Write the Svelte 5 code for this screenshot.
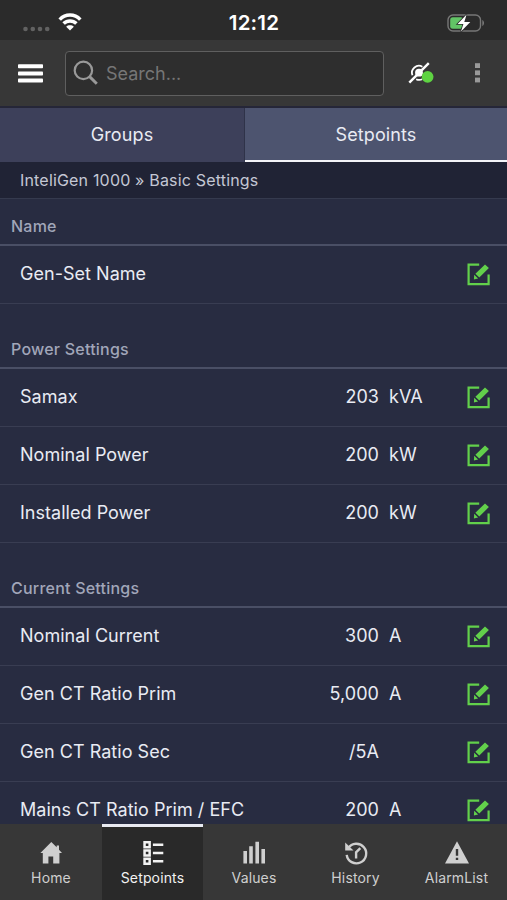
<script lang="ts">
  type Icon = "home" | "setpoints" | "values" | "history" | "alarm";

  interface Setpoint {
    name: string;
    value?: string;
    unit?: string;
  }

  const sections: Array<{ title: string; items: Setpoint[] }> = [
    { title: "Name", items: [{ name: "Gen-Set Name" }] },
    {
      title: "Power Settings",
      items: [
        { name: "Samax", value: "203", unit: "kVA" },
        { name: "Nominal Power", value: "200", unit: "kW" },
        { name: "Installed Power", value: "200", unit: "kW" },
      ],
    },
    {
      title: "Current Settings",
      items: [
        { name: "Nominal Current", value: "300", unit: "A" },
        { name: "Gen CT Ratio Prim", value: "5,000", unit: "A" },
        { name: "Gen CT Ratio Sec", value: "/5A" },
        { name: "Mains CT Ratio Prim / EFC", value: "200", unit: "A" },
      ],
    },
  ];

  const navItems: Array<{ id: Icon; label: string }> = [
    { id: "home", label: "Home" },
    { id: "setpoints", label: "Setpoints" },
    { id: "values", label: "Values" },
    { id: "history", label: "History" },
    { id: "alarm", label: "AlarmList" },
  ];

  let tab = $state("Setpoints");
  let page = $state<Icon>("setpoints");
</script>

<div class="app">
  <div class="status">
    <div class="status__left">
      <svg width="27" height="6" viewBox="0 0 27 6" fill="#626262">
        <circle cx="2.5" cy="3" r="2.3" />
        <circle cx="9.8" cy="3" r="2.3" />
        <circle cx="17" cy="3" r="2.3" />
        <circle cx="24.2" cy="3" r="2.3" />
      </svg>
      <svg class="wifi" width="24" height="18" viewBox="0 0 24 18" fill="none" stroke="#fff" stroke-width="3.5">
        <path d="M1.7 6.6C7.4.6 16.6.6 22.3 6.6" />
        <path d="M5.6 10.6c3.6-3.6 9.2-3.6 12.8 0" />
        <path d="M12 17.5 8.2 13.7c2-1.9 5.6-1.9 7.6 0z" fill="#fff" stroke="none" />
      </svg>
    </div>
    <span class="status__time">12:12</span>
    <svg class="battery" width="38" height="18" viewBox="0 0 38 18">
      <rect x="1" y="1" width="32.5" height="16" rx="5" fill="none" stroke="#777" stroke-width="1.4" />
      <path d="M35.3 6v6c2.3-1 2.3-5 0-6z" fill="#777" />
      <rect x="3.2" y="3.2" width="13" height="11.6" rx="2.5" fill="#62c466" />
      <path d="M19.6.6 10.6 10h5.8L14 17.6 23.3 8h-6z" fill="#fff" stroke="#2b2b2b" stroke-width="1.6" paint-order="stroke" />
    </svg>
  </div>

  <header class="toolbar">
    <button type="button" class="toolbar__button toolbar__menu" aria-label="Menu">
      <svg width="25" height="19" viewBox="0 0 25 19" fill="#fff">
        <rect width="25" height="4" y="0.3" rx=".8" />
        <rect width="25" height="4" y="7.5" rx=".8" />
        <rect width="25" height="4" y="14.6" rx=".8" />
      </svg>
    </button>
    <label class="search">
      <svg width="26" height="26" viewBox="0 0 26 26" fill="none" stroke="#999">
        <circle cx="10.4" cy="10.4" r="8.7" stroke-width="2.2" />
        <path d="m16.6 16.6 7.2 7.2" stroke-width="2.9" />
      </svg>
      <input type="text" placeholder="Search..." aria-label="Search" />
    </label>
    <button type="button" class="toolbar__button toolbar__link" aria-label="Connection">
      <svg width="26" height="22" viewBox="0 0 26 22" fill="none" stroke="#fff">
        <path d="M1.3 20.6 20.8 1.2" stroke-width="2.4" />
        <path d="M4.4 13.2A7 7 0 0 1 14.4 4.7M8.2 17.2a7 7 0 0 0 6 .1" stroke-width="1.8" />
        <circle cx="11" cy="10.7" r="3.9" fill="#fff" stroke="none" />
        <circle cx="19.6" cy="14.8" r="5.9" fill="#5ed342" stroke="none" />
      </svg>
    </button>
    <button type="button" class="toolbar__button toolbar__more" aria-label="More">
      <svg width="5" height="20" viewBox="0 0 5 20" fill="#999">
        <rect y="0.2" width="5" height="4.8" />
        <rect y="7.4" width="5" height="4.8" />
        <rect y="14.6" width="5" height="4.8" />
      </svg>
    </button>
  </header>

  <div class="tabs">
    {#each ["Groups", "Setpoints"] as name (name)}
      <button type="button" class:active={tab === name} onclick={() => (tab = name)}>{name}</button>
    {/each}
  </div>

  <div class="breadcrumb">InteliGen 1000 » Basic Settings</div>

  <main class="list">
    {#each sections as section (section.title)}
      <section>
        <h2>{section.title}</h2>
        {#each section.items as item (item.name)}
          <div class="row">
            <span class="row__name">{item.name}</span>
            <span class="row__value">{item.value ?? ""}</span>
            <span class="row__unit">{item.unit ?? ""}</span>
            <button type="button" class="row__edit" aria-label="Edit {item.name}">
              <svg width="23" height="23" viewBox="0 0 23 23" fill="#62d04b">
                <path d="M12.2 1.7H1.6v19.5h20V11.5" fill="none" stroke="#62d04b" stroke-width="2.2" />
                <path d="m18 1.4 3.9 3.7-9.6 9.3-3.9-3.7zM7.2 11.8l3.9 3.7-4.2 1z" />
              </svg>
            </button>
          </div>
        {/each}
      </section>
    {/each}
  </main>

  <nav class="nav">
    {#each navItems as item (item.id)}
      <button type="button" class:active={page === item.id} onclick={() => (page = item.id)}>
        <svg width="26" height="26" viewBox="0 0 26 26" fill="currentColor">
          {#if item.id === "home"}
            <path d="M13.3 2 2.4 13h2.4v10.6h5.6v-7.2h4.8v7.2h6.2V13h2.6l-3-3.2V5.5h-2.3v1.8z" />
          {:else if item.id === "setpoints"}
            {#each [1, 9.3, 17.6] as y}
              <path
                fill-rule="evenodd"
                transform="translate(3.3 {y})"
                d="M0 0h7.6v7.4H0zM2.5 2.4v2.6h2.6V2.4zM9.6 2.5h10.4v2.4H9.6z"
              />
            {/each}
          {:else if item.id === "values"}
            <path d="M2.4 11h3.6v12.6H2.4zM8.2 6.3h3.6v17.3H8.2zM14.4 1.8H18v21.8h-3.6zM20.4 9H24v14.6h-3.6z" />
          {:else if item.id === "history"}
            <path d="M5.2 8.2a9.8 9.8 0 1 1-1.5 6.6" fill="none" stroke="currentColor" stroke-width="2.4" />
            <path d="M2.2 2.4v8.2h8.3z" />
            <path d="m17.3 8.2-4.2 4.1v6.2" fill="none" stroke="currentColor" stroke-width="2.4" />
          {:else}
            <path fill-rule="evenodd" d="M13 1.3 25 23.6H1zM11.8 9v6.8h2.4V9zM11.8 17.7v2.4h2.4v-2.4z" />
          {/if}
        </svg>
        <span>{item.label}</span>
      </button>
    {/each}
  </nav>
</div>

<style>
  :global(body) {
    margin: 0;
    background: #282c41;
  }

  .app {
    display: flex;
    flex-direction: column;
    height: 900px;
    overflow: hidden;
    background: #282c41;
    color: #e9ebf3;
    font-family: Inter, "Liberation Sans", sans-serif;
  }

  button {
    margin: 0;
    border: 0;
    padding: 0;
    background: none;
    color: inherit;
    font: inherit;
    cursor: pointer;
  }

  svg {
    display: block;
    flex: none;
  }

  .status {
    display: grid;
    flex: none;
    box-sizing: border-box;
    height: 40px;
    grid-template-columns: 1fr auto 1fr;
    align-items: center;
    padding: 5px 22px 0 23px;
    background: #2b2b2b;
    color: #fff;
  }

  .status__left {
    display: flex;
    align-items: flex-end;
    gap: 8px;
  }

  .wifi {
    margin-bottom: 1px;
  }

  .status__time {
    font-size: 20.5px;
    font-weight: 600;
    letter-spacing: 0.2px;
    line-height: 24px;
  }

  .battery {
    justify-self: end;
  }

  .toolbar {
    display: flex;
    flex: none;
    box-sizing: border-box;
    height: 68px;
    align-items: center;
    border-bottom: 2px solid #252638;
    background: #373737;
  }

  .toolbar__menu {
    margin: 0 22px 0 18px;
  }

  .toolbar__link {
    margin-left: 24px;
  }

  .toolbar__more {
    margin-left: 41px;
  }

  .search {
    display: flex;
    box-sizing: border-box;
    width: 319px;
    height: 45px;
    align-items: center;
    gap: 7px;
    border: 1px solid #5f5f5f;
    border-radius: 4px;
    padding-left: 7px;
    background: #2e2e2e;
  }

  .search input {
    min-width: 0;
    flex: 1;
    border: 0;
    outline: 0;
    padding: 0;
    background: transparent;
    color: #fff;
    font: inherit;
    font-size: 18px;
  }

  .search input::placeholder {
    color: #767676;
    opacity: 1;
  }

  .tabs {
    display: grid;
    flex: none;
    height: 54px;
    grid-template-columns: 245px 1fr;
    background: #3d405a;
  }

  .tabs button {
    border-bottom: 2px solid transparent;
    font-size: 18px;
    letter-spacing: 0.1px;
  }

  .tabs button:first-child {
    border-right: 1px solid #2f3349;
  }

  .tabs button.active {
    border-bottom-color: #f3f4f8;
    background: #4d546f;
  }

  .breadcrumb {
    flex: none;
    height: 36px;
    border-bottom: 1px solid #353a4e;
    padding-left: 20px;
    background: #202335;
    color: #c4c7d4;
    font-size: 16px;
    letter-spacing: 0.18px;
    line-height: 36px;
  }

  .list {
    min-height: 0;
    flex: 1;
    overflow: hidden;
  }

  h2 {
    box-sizing: border-box;
    height: 65px;
    margin: 0;
    border-bottom: 2px solid #4a4f65;
    padding: 34px 0 0 11px;
    color: #a1a6b9;
    font-size: 16px;
    font-weight: 500;
    letter-spacing: 0.22px;
    line-height: 22px;
  }

  section:first-child h2 {
    height: 47px;
    padding-top: 16px;
  }

  .row {
    display: grid;
    box-sizing: border-box;
    height: 58px;
    grid-template-columns: 1fr 80px 68px 23px;
    align-items: center;
    column-gap: 10px;
    border-bottom: 1px solid #393d52;
    padding: 0 17px 0 20px;
    font-size: 18px;
    letter-spacing: 0.03px;
    line-height: 24px;
  }

  .row__name {
    padding-bottom: 1px;
    white-space: nowrap;
  }

  .row__value {
    padding-bottom: 1px;
    text-align: right;
  }

  .row__unit {
    padding-bottom: 1px;
  }

  .nav {
    display: grid;
    flex: none;
    height: 76px;
    grid-template-columns: 102px 101px 102px 101px 101px;
    background: #373737;
    color: #cfcfcf;
  }

  .nav button {
    display: flex;
    flex-direction: column;
    align-items: center;
    gap: 2px;
    border-top: 3px solid transparent;
    padding-top: 13px;
    font-size: 14px;
    letter-spacing: 0.15px;
    line-height: 20px;
  }

  .nav button.active {
    border-top-color: #e8eaf2;
    background: #292929;
    color: #f2f2f2;
  }
</style>
